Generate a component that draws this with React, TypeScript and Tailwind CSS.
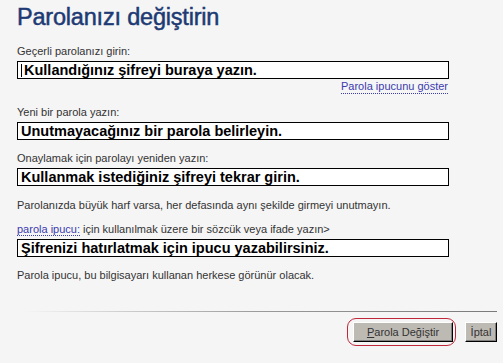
import React from 'react';

const font = { fontFamily: '"Liberation Sans", Arial, sans-serif' };

const Field: React.FC<{ text: string; caret?: boolean }> = ({ text, caret }) => (
  <div className="flex h-[18px] w-[432px] items-center border border-black bg-white pl-[3px] text-[14.5px] font-bold leading-none text-black">
    {caret && <span className="mr-[2px] inline-block h-[13px] w-px bg-black" />}
    <span>{text}</span>
  </div>
);

const App: React.FC = () => {
  return (
    <div className="h-[363px] w-[503px] overflow-hidden bg-[#f5f5f5] text-[11px] text-[#333]" style={font}>
      <div className="pl-[17px] pr-[54px]">
        <h1 className="pt-[3px] text-[23.5px] leading-[28px] tracking-[-0.2px] text-[#1d3a74] [-webkit-text-stroke:0.5px_#1d3a74]">
          Parolanızı değiştirin
        </h1>

        <p className="mt-[14px] leading-[13px]">Geçerli parolanızı girin:</p>
        <div className="mt-[3px]">
          <Field text="Kullandığınız şifreyi buraya yazın." caret />
        </div>
        <div className="mt-[1px] flex justify-end pr-[1px]">
          <span className="border-b border-dotted border-[#3b3bb0] leading-[13px] text-[#3b3bb0]">Parola ipucunu göster</span>
        </div>

        <p className="mt-[12px] leading-[13px]">Yeni bir parola yazın:</p>
        <div className="mt-[3px]">
          <Field text="Unutmayacağınız bir parola belirleyin." />
        </div>

        <p className="mt-[12px] leading-[13px]">Onaylamak için parolayı yeniden yazın:</p>
        <div className="mt-[3px]">
          <Field text="Kullanmak istediğiniz şifreyi tekrar girin." />
        </div>

        <p className="mt-[13px] leading-[13px]">Parolanızda büyük harf varsa, her defasında aynı şekilde girmeyi unutmayın.</p>

        <p className="mt-[11px] leading-[13px]">
          <span className="border-b border-dotted border-[#3b3bb0] text-[#3b3bb0]">parola ipucu:</span> için kullanılmak üzere bir sözcük veya ifade yazın&gt;
        </p>
        <div className="mt-[3px]">
          <Field text="Şifrenizi hatırlatmak için ipucu yazabilirsiniz." />
        </div>

        <p className="mt-[12px] leading-[13px]">Parola ipucu, bu bilgisayarı kullanan herkese görünür olacak.</p>
      </div>

      <div className="ml-[25px] mr-[6px] mt-[29px] h-px bg-gradient-to-r from-[#f5f5f5] via-[#9a9a9a] to-[#7a7a7a]" />

      <div className="mt-[6px] flex justify-end gap-[9px] pr-[6px]">
        <div className="rounded-[9px] border border-[#c0283a] py-[3px] pl-[5px] pr-[2px]">
          <button className="h-[20px] w-[100px] border border-b-black border-l-white border-r-black border-t-white bg-[#bdbab3] text-[11px] text-[#333] shadow-[inset_-1px_-1px_0_#808080]">
            <span className="underline">P</span>arola Değiştir
          </button>
        </div>
        <div className="pt-[4px]">
          <button className="h-[20px] w-[32px] border border-b-black border-l-white border-r-black border-t-white bg-[#bdbab3] text-[11px] text-[#333] shadow-[inset_-1px_-1px_0_#808080]">
            İptal
          </button>
        </div>
      </div>
    </div>
  );
};

export default App;
